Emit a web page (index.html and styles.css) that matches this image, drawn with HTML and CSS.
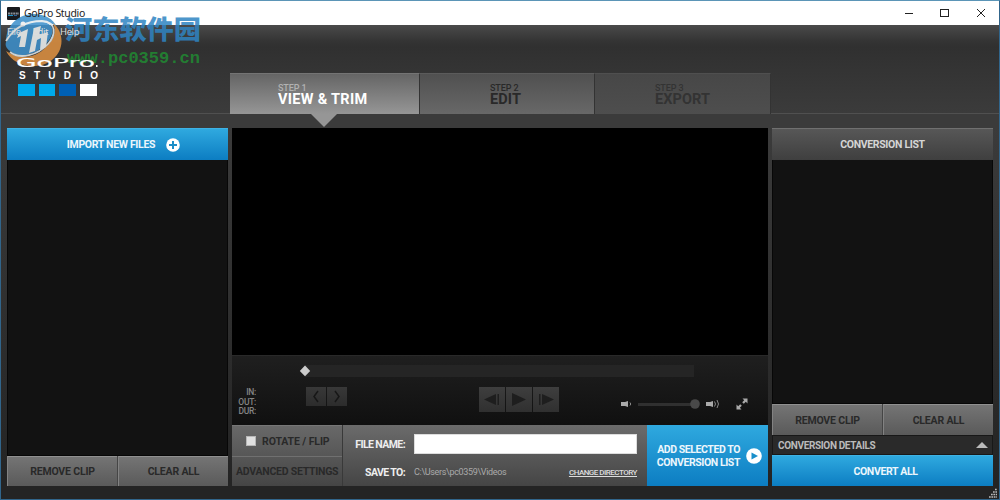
FILE: index.html
```html
<!DOCTYPE html>
<html lang="en">
<head>
<meta charset="utf-8">
<title>GoPro Studio</title>
<link rel="stylesheet" href="styles.css">
</head>
<body>
<div class="window">
  <div class="titlebar">
    <svg class="app-icon" width="13" height="13" viewBox="0 0 13 13"><rect width="13" height="13" rx="1" fill="#181a1e"/><path d="M1 6.500h11" stroke="#8a8f96" stroke-width="2" stroke-dasharray="2 .6"/><path d="M1 8.500h5" stroke="#2092c4"/><path d="M7 8.500h3" stroke="#285c9a"/></svg>
    <span class="app-name">GoPro Studio</span>
    <svg class="win-buttons" width="82" height="12" viewBox="0 0 82 12" fill="none" stroke="#222"><path d="M0 6.500h8"/><rect x="35.500" y="2.500" width="8" height="7"/><path d="M72 2l8 8M80 2l-8 8"/></svg>
  </div>
  <header class="header">
    <div class="brand">
      <nav class="menu"><span>File</span><span>Edit</span><span>Help</span></nav>
      <svg class="logo" width="100" height="50" viewBox="0 0 100 50" fill="#fff">
        <text class="logo-name" x="8" y="14.500" textLength="79" lengthAdjust="spacingAndGlyphs">GoPro</text>
        <rect x="88" y="13" width="1.500" height="2"/>
        <text class="logo-sub" x="11" y="26.500" textLength="79">STUDIO</text>
        <rect x="10" y="32" width="17" height="12" fill="#00a9ea"/><rect x="31" y="32" width="16" height="12" fill="#00a9ea"/><rect x="51" y="32" width="17" height="12" fill="#0060b4"/><rect x="72" y="32" width="17" height="12"/>
      </svg>
    </div>
    <nav class="steps">
      <div class="step step-active"><small>STEP 1</small><b>VIEW &amp; TRIM</b></div>
      <div class="step step-edit"><small>STEP 2</small><b>EDIT</b></div>
      <div class="step step-export"><small>STEP 3</small><b>EXPORT</b></div>
    </nav>
  </header>
  <main class="workspace">
    <section class="panel">
      <div class="bar blue import"><span>IMPORT NEW FILES</span><svg width="14" height="14" viewBox="0 0 14 14"><circle cx="7" cy="7" r="6.800" fill="#fff"/><path d="M7 3v8M3 7h8" stroke="#1b8ec8" stroke-width="2"/></svg></div>
      <div class="list"></div>
      <div class="buttons"><div>REMOVE CLIP</div><div>CLEAR ALL</div></div>
    </section>
    <section class="center">
      <div class="video"></div>
      <div class="controls">
        <div class="track"><svg width="12" height="12" viewBox="0 0 12 12"><path d="M6 .5L11.200 6 6 11.200.8 6z" fill="#ccc"/></svg></div>
        <div class="control-row">
          <div class="times"><span>IN:</span><span>OUT:</span><span>DUR:</span></div>
          <div class="trim">
            <svg width="20" height="19" viewBox="0 0 20 19"><path d="M12 4L8 9.500l4 5.500" fill="none" stroke="#171717" stroke-width="1.500"/></svg>
            <svg width="20" height="19" viewBox="0 0 20 19"><path d="M8 4l4 5.500L8 15" fill="none" stroke="#171717" stroke-width="1.500"/></svg>
          </div>
          <div class="play">
            <svg width="26" height="25" viewBox="0 0 26 25" fill="#1e1e1e"><path d="M5 12.500L17 7v11zM18.500 7H20v11h-1.500z"/></svg>
            <svg width="26" height="25" viewBox="0 0 26 25" fill="#1e1e1e"><path d="M6 6l14 6.500L6 19z"/></svg>
            <svg width="26" height="25" viewBox="0 0 26 25" fill="#1e1e1e"><path d="M21 12.500L9 7v11zM6 7h1.500v11H6z"/></svg>
          </div>
          <svg class="volume" width="130" height="18" viewBox="0 0 130 18">
            <g fill="#aaa"><path d="M1 7h4l3-1v6l-3-1H1zM86 7h4l3-1v6l-3-1h-4z"/></g>
            <path d="M10 7.500q1.500 1.500 0 3M94.500 6.500q2 2.500 0 5M97 5q3 4 0 8" fill="none" stroke="#888"/>
            <path d="M18 9.500h57" stroke="#303030" stroke-width="3"/><circle cx="75" cy="9" r="4.800" fill="#494949"/>
            <path d="M122.500 3.500h5v5l-1.700-1.700-2 2-1.600-1.600 2-2zM116.500 9.500v5h5l-1.700-1.700 2-2-1.600-1.600-2 2z" fill="#aaa"/>
          </svg>
        </div>
      </div>
      <div class="settings">
        <div class="options"><div class="option"><i class="check"></i><span>ROTATE / FLIP</span></div><div class="option advanced">ADVANCED SETTINGS</div></div>
        <div class="form">
          <label class="file-label">FILE NAME:</label><div class="field"></div>
          <label class="save-label">SAVE TO:</label><div class="destination"><span class="path">C:\Users\pc0359\Videos</span><span class="change">CHANGE DIRECTORY</span></div>
        </div>
        <div class="add blue"><span>ADD SELECTED TO<br>CONVERSION LIST</span><svg width="16" height="16" viewBox="0 0 16 16"><circle cx="8" cy="8" r="7.800" fill="#fff"/><path d="M5.500 4.500L12 8l-6.500 3.500z" fill="#198fca"/></svg></div>
      </div>
    </section>
    <section class="panel">
      <div class="bar conversion">CONVERSION LIST</div>
      <div class="list"></div>
      <div class="buttons right-buttons"><div>REMOVE CLIP</div><div>CLEAR ALL</div></div>
      <div class="details"><span>CONVERSION DETAILS</span><svg width="12" height="6" viewBox="0 0 12 6"><path d="M6 0l6 6H0z" fill="#bbb"/></svg></div>
      <div class="bar blue convert">CONVERT ALL</div>
    </section>
  </main>
  <svg class="grip" width="10" height="10" viewBox="0 0 10 10"><path d="M7 1.500h2M5 4h4M3 6.500h6M1 9h8" stroke="#bbb" stroke-width="1.700" stroke-dasharray="1.700 .7"/></svg>
  <svg class="watermark" width="210" height="76" viewBox="0 0 210 76">
    <g opacity=".87">
      <path d="M6 40C7 24 19 14 34 14c11 0 19 5 23 13-3-3-8-5-13-5-16 0-29 6-38 18z" fill="#3f91cc"/>
      <path d="M53 23c12 10 11 28-1 37-14 11-38 7-46-9 13 9 29 8 40-4 8-8 11-15 7-24z" fill="#de9142"/>
      <path d="M6 42c8-14 22-21 36-20 13 1 13 12 5 21-10 12-28 16-37 8-4-3-5-6-4-9z" fill="#3f91cc"/>
      <path d="M6 41C14 28 27 21 42 21c15 1 14 14 6 23-10 11-28 16-38 8" fill="none" stroke="#e4ebed" stroke-width="1.800"/>
      <path d="M19 33l9-4-3 18h-6l2-11-4 2zM34 28l7-2-2 9 9-3-2 15-6 3 1-12-4 2-2 11-6 2z" fill="#f0f3f3"/><circle cx="23" cy="24" r="2.500" fill="#eee"/>
    </g>
    <text class="wm-cn" x="65" y="39" textLength="136" lengthAdjust="spacingAndGlyphs">河东软件园</text>
    <text class="wm-url" x="67" y="62.500" textLength="133" lengthAdjust="spacingAndGlyphs">www.pc0359.cn</text>
  </svg>
</div>
</body>
</html>
```
FILE: styles.css
```css
* { box-sizing: border-box; }
body { margin: 0; font-family: Roboto, "Liberation Sans", sans-serif; font-size: 10.5px; font-weight: 700; }
svg { display: block; flex: none; }
.window { position: relative; width: 1000px; height: 500px; overflow: hidden; border: 1px solid #31658b; border-top-color: #5b95b7; background: linear-gradient(#3b3b3b 0, #3b3b3b 125px, #242424 480px); }
.titlebar { height: 24px; background: #fff; display: flex; align-items: center; padding: 0 12px 0 6px; }
.app-name { position: relative; z-index: 2; margin-left: 4px; font: 10.5px/12px "Noto Sans", sans-serif; letter-spacing: -.35px; color: #222; }
.win-buttons { margin-left: auto; }
.header { height: 89px; border-bottom: 1px solid #505050; background: linear-gradient(#4a4a4a, #343434 16px, #303030 22px, #3b3b3b 88px); display: flex; }
.brand { position: relative; z-index: 2; width: 229px; }
.menu { height: 24px; display: flex; gap: 12px; padding: 0 6px; font: 9.500px/14px "Noto Sans", sans-serif; letter-spacing: -.4px; color: #ddd; }
.logo { margin-left: 7px; margin-top: 3px; }
.logo-name { font: 400 12.500px "DejaVu Sans", sans-serif; stroke: #fff; stroke-width: .2px; }
.logo-sub { font: 700 10px "Liberation Sans", sans-serif; }
.steps { display: flex; width: 541px; height: 41px; margin-top: 48px; }
.step { position: relative; padding-top: 9px; border-top: 1px solid #747474; border-right: 1px solid #333; }
.step small, .step b { display: block; white-space: nowrap; }
.step small { font: 500 9px/10px Roboto, sans-serif; letter-spacing: -.1px; }
.step b { font: 700 14.5px/13px Roboto, sans-serif; letter-spacing: .1px; }
.step-active { width: 190px; padding-left: 48px; background: linear-gradient(#656565, #969696); color: #fff; }
.step-active b { letter-spacing: .3px; }
.step-active small { color: #b2b2b2; }
.step-active::after { content: ""; position: absolute; left: 81px; top: 40px; border: 13px solid transparent; border-top-color: #969696; border-bottom: 0; }
.step-edit { width: 175px; padding-left: 70px; background: linear-gradient(#505050, #686868); color: #292929; border-top-color: #5b5b5b; }
.step-export { width: 176px; padding-left: 60px; background: linear-gradient(#474747, #4e4e4e); color: #333; border-top-color: #4f4f4f; }
.workspace { display: grid; grid-template-columns: 221px 536px 221px; gap: 4px; height: 358px; margin: 14px 6px 0; }
.panel, .center { display: flex; flex-direction: column; min-width: 0; }
.blue { background: linear-gradient(#2fa9df, #0c7dc2); color: #ecf6fc; }
.bar { height: 32px; display: flex; align-items: center; justify-content: center; border-top: 1px solid #3eb2e4; }
.import { gap: 11px; padding-left: 12px; letter-spacing: -.32px; }
.list { flex: 1; background: #121212; border: 1px solid #070707; border-top: 0; }
.buttons { height: 30px; display: grid; grid-template-columns: 110px 1fr; gap: 1px; background: #454545; letter-spacing: -.18px; }
.buttons div { display: flex; align-items: center; justify-content: center; background: linear-gradient(#747474, #5a5a5a); border-top: 1px solid #909090; border-left: 1px solid #828282; color: #292929; }
.right-buttons { height: 31px; }
.conversion { background: linear-gradient(#575757, #3f3f3f); border-top-color: #707070; color: #d5d5d5; letter-spacing: -.33px; }
.details { height: 20px; display: flex; align-items: center; justify-content: space-between; padding: 0 4px 0 5px; background: #2a2a2a; border: 1px solid #181818; color: #bbb; font-size: 10px; letter-spacing: -.35px; }
.convert { height: 31px; padding-left: 6px; letter-spacing: -.35px; }
.video { height: 227px; background: #000; }
.controls { height: 70px; padding: 9px 0 0; background: linear-gradient(#1f1f1f, #101010); border-top: 1px solid #292929; }
.track { width: 395px; height: 12px; margin-left: 67px; background: linear-gradient(90deg, transparent 6px, #252525 6px); }
.control-row { display: flex; align-items: flex-start; padding-top: 10px; }
.times { width: 24px; margin-top: 1px; display: grid; justify-items: end; font: 500 8.500px/9.500px Roboto, sans-serif; letter-spacing: -.3px; color: #858585; }
.trim { margin-left: 50px; display: flex; gap: 1px; }
.trim svg { background: linear-gradient(#383838, #2c2c2c); }
.play { margin-left: 132px; display: flex; gap: 1px; }
.play svg { background: linear-gradient(#3e3e3e, #303030); }
.volume { margin-left: 61px; margin-top: 8px; }
.settings { display: grid; grid-template-columns: 111px 304px 121px; height: 61px; }
.options { background: linear-gradient(#696969, #454545); border-right: 1px solid #393939; color: #292929; }
.option { height: 31px; display: flex; align-items: center; border-top: 1px solid #777; padding-left: 14px; white-space: nowrap; letter-spacing: -.1px; }
.advanced { height: 30px; padding-left: 4px; border-color: #707070; letter-spacing: -.25px; }
.check { width: 10px; height: 10px; margin-right: 6px; background: #e0e0e0; border: 1px solid #b7b7b7; }
.form { display: grid; grid-template-columns: 62px 223px; grid-template-rows: 20px 20px; column-gap: 9px; row-gap: 8px; padding: 9px 0 0; background: linear-gradient(#6b6b6b, #454545); color: #eee; align-items: center; }
.form label { justify-self: end; white-space: nowrap; letter-spacing: -.6px; }
.field { height: 20px; background: #fff; border: 1px solid #ddd; }
.destination { display: flex; justify-content: space-between; align-items: center; }
.path { font-weight: 400; font-size: 9px; letter-spacing: -.33px; color: #aaa; }
.change { font-weight: 500; font-size: 8px; letter-spacing: -.5px; color: #ddd; text-decoration: underline; }
.add { display: flex; align-items: center; justify-content: flex-end; gap: 6px; padding-right: 6px; letter-spacing: -.42px; line-height: 13px; text-align: right; white-space: nowrap; }
.grip { position: absolute; right: 1px; bottom: 1px; }
.watermark { position: absolute; left: -1px; top: -1px; }
.wm-cn { font: 900 26px "Noto Sans CJK SC", sans-serif; fill: #2f84c2; opacity: .85; }
.wm-url { font: 700 17px "Liberation Mono", monospace; fill: #218a32; opacity: .85; }
```
